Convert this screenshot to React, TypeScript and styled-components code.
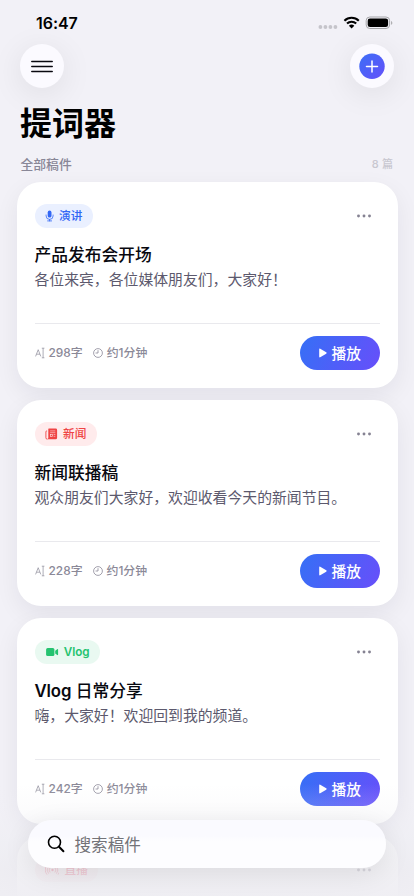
import React from "react";
import styled, { createGlobalStyle } from "styled-components";

const GlobalStyle = createGlobalStyle`
  * { box-sizing: border-box; }
  html, body { margin: 0; padding: 0; overflow: hidden; background: #f2f1f7; }
  button, input { font: inherit; border: 0; padding: 0; margin: 0; background: none; }
`;

const Screen = styled.main`
  position: relative;
  width: 414px;
  height: 896px;
  overflow: hidden;
  background: #f2f1f7;
  color: #08080f;
  font-family: Inter, "Noto Sans CJK SC", sans-serif;
  white-space: nowrap;
`;

const StatusBar = styled.header`
  display: flex;
  justify-content: space-between;
  height: 44px;
  padding: 13px 21px 0 36px;
`;

const Clock = styled.span`
  font-size: 16px;
  line-height: 20px;
  font-weight: 600;
  letter-spacing: -0.05px;
  color: #000;
`;

const StatusIcons = styled.svg`
  width: 76px;
  height: 20px;
`;

const NavBar = styled.nav`
  display: flex;
  justify-content: space-between;
  padding: 0 20px;
  height: 44px;
`;

const RoundButton = styled.button`
  && {
    display: grid;
    place-items: center;
    width: 44px;
    height: 44px;
    border-radius: 50%;
    background: #fbfaff;
    box-shadow: 0 6px 32px rgba(0, 0, 0, 0.085);
  }
  svg { display: block; }
`;

const PageTitle = styled.h1`
  margin: 16px 0 0 20px;
  font-size: 32px;
  line-height: 40px;
  font-weight: 700;
  color: #000;
`;

const SectionHeader = styled.div`
  display: flex;
  align-items: center;
  justify-content: space-between;
  height: 20px;
  margin: 9px 21px 9px 20.5px;
`;

const SectionLabel = styled.span`
  font-size: 12.8px;
  font-weight: 500;
  color: #898797;
`;

const SectionCount = styled.span`
  font-size: 11px;
  font-weight: 500;
  letter-spacing: 0.1px;
  color: #c8c7d0;
`;

const CardList = styled.section`
  display: flex;
  flex-direction: column;
  gap: 12px;
  padding: 0 16.5px;
`;

const CardBox = styled.article`
  flex: none;
  height: 206px;
  padding: 22px 18px 18px;
  border-radius: 24px;
  background: #fff;
  box-shadow: 0 8px 24px rgba(20, 15, 40, 0.065);
`;

const CardTop = styled.div`
  display: flex;
  justify-content: space-between;
  align-items: center;
  height: 24px;
  padding-right: 9px;
`;

const Tag = styled.span<{ $color: string; $bg: string; $iconSpace: number }>`
  display: flex;
  align-items: center;
  height: 24px;
  padding: 0 10.5px 0 10px;
  border-radius: 12px;
  font-size: 11.7px;
  line-height: 22px;
  font-weight: 500;
  color: ${(p) => p.$color};
  background: ${(p) => p.$bg};
  svg { flex: none; margin-right: ${(p) => p.$iconSpace - 14}px; }
`;

const TagText = styled.span`
  margin-top: -1px;
`;

const CardTitle = styled.h2`
  margin: 15px 0 0;
  font-size: 16.75px;
  line-height: 24px;
  font-weight: 500;
  color: #08080f;
`;

const Latin = styled.span`
  font-weight: 600;
  letter-spacing: -0.1px;
`;

const CardText = styled.p`
  margin: 1px 0 0;
  height: 55px;
  font-size: 14.85px;
  line-height: 24px;
  color: #5c596d;
`;

const CardFooter = styled.div`
  display: flex;
  align-items: center;
  height: 47px;
  padding-top: 12px;
  border-top: 1px solid #e9e9ed;
`;

const Meta = styled.span`
  display: flex;
  align-items: center;
  gap: 4px;
  margin-right: 10px;
  font-size: 11.9px;
  line-height: 18px;
  font-weight: 500;
  color: #8b8998;
`;

const PlayButton = styled.button`
  && {
    display: flex;
    align-items: center;
    gap: 5px;
    flex: none;
    width: 80px;
    height: 34px;
    margin-left: auto;
    padding-left: 19px;
    border-radius: 17px;
    background: linear-gradient(115deg, #386ef6 5%, #6550fa 95%);
    color: #fff;
    font-size: 14.75px;
    font-weight: 500;
  }
`;

const PlayLabel = styled.span`
  margin-top: -2px;
`;

const BottomFade = styled.div`
  position: absolute;
  left: 0;
  right: 0;
  bottom: 0;
  height: 112px;
  background: linear-gradient(
    to bottom,
    rgba(239, 238, 243, 0) 0%,
    rgba(239, 238, 243, 0.18) 22%,
    rgba(238, 238, 243, 0.66) 50%,
    rgba(237, 236, 241, 0.78) 77%,
    rgba(239, 238, 243, 0.97) 100%
  );
`;

const SearchBar = styled.label`
  position: absolute;
  left: 28px;
  right: 28px;
  bottom: 28px;
  display: flex;
  align-items: center;
  gap: 9.5px;
  height: 48px;
  padding-left: 19px;
  border-radius: 24px;
  background: linear-gradient(#fafaff 0 34%, #fdfdff 44%);
  box-shadow: 0 6px 28px rgba(0, 0, 0, 0.09);
`;

const SearchHint = styled.span`
  font-size: 16.6px;
  color: #737378;
`;

type Kind = "speech" | "news" | "vlog" | "live";

interface Script {
  kind: Kind;
  tag: React.ReactNode;
  color: string;
  bg: string;
  iconSpace: number;
  title?: React.ReactNode;
  text?: string;
  count?: string;
}

const scripts: Script[] = [
  { kind: "speech", tag: "演讲", color: "#3267f5", bg: "#eaf0ff", iconSpace: 14.5, title: "产品发布会开场", text: "各位来宾，各位媒体朋友们，大家好！", count: "298字" },
  { kind: "news", tag: "新闻", color: "#ef4444", bg: "#ffebec", iconSpace: 18.6, title: "新闻联播稿", text: "观众朋友们大家好，欢迎收看今天的新闻节目。", count: "228字" },
  { kind: "vlog", tag: <Latin>Vlog</Latin>, color: "#25c370", bg: "#e9f9f1", iconSpace: 19.3, title: <><Latin>Vlog</Latin> 日常分享</>, text: "嗨，大家好！欢迎回到我的频道。", count: "242字" },
  { kind: "live", tag: "直播", color: "#f43f5e", bg: "#feecef", iconSpace: 20 },
];

const KindIcon = ({ kind }: { kind: Kind }) => (
  <svg width="14" height="14" viewBox="0 0 14 14" fill="none" stroke="currentColor">
    {kind === "speech" && (
      <>
        <rect x="2.7" y="1.6" width="3.8" height="7" rx="1.9" fill="currentColor" stroke="none" />
        <path d="M1.100 6v.9a3.500 3.500 0 0 0 7 0V6M4.600 10.400v1.500M2.600 11.900h4" strokeWidth=".8" strokeLinecap="round" />
      </>
    )}
    {kind === "news" && (
      <g transform="translate(-.6 0)">
        <path d="M4.400 1.500h6.900a1.400 1.400 0 0 1 1.400 1.400v7.800a1.500 1.500 0 0 1-1.500 1.500H3.200c.5-.4.7-.9.7-1.500V2a.5.5 0 0 1 .5-.5Z" fill="currentColor" stroke="none" />
        <path d="M2.700 4h-.5a.7.7 0 0 0-.7.7v6a1.400 1.400 0 0 0 1.600 1.400" strokeWidth=".9" />
        <path d="M5.700 3.900h5.200M5.700 5.700h5.200M9.200 7.500h1.700M9.200 9.300h1.700" stroke="#ffebec" strokeWidth=".55" />
        <rect x="5.900" y="7.400" width="2.200" height="2.200" stroke="#ffebec" strokeWidth=".6" />
      </g>
    )}
    {kind === "vlog" && (
      <g fill="currentColor" stroke="none">
        <rect x="1.100" y="3" width="8.300" height="8.100" rx="1.500" />
        <path d="m10.200 5.700 2-1.500c.5-.4.9-.1.9.4v5c0 .5-.4.7-.9.4l-2-1.500Z" />
      </g>
    )}
    {kind === "live" && (
      <g strokeLinecap="round">
        <circle cx="7.500" cy="7" r="1.200" fill="currentColor" stroke="none" />
        <path d="M4.900 4.800a3.400 3.400 0 0 0 0 4.400M10.100 4.800a3.400 3.400 0 0 1 0 4.400M3.300 3.700a5.300 5.300 0 0 0 0 6.600M11.700 3.700a5.300 5.300 0 0 1 0 6.600M1.800 2.600a7.200 7.200 0 0 0 0 8.800M13.200 2.600a7.200 7.200 0 0 1 0 8.800" strokeWidth=".8" />
      </g>
    )}
  </svg>
);

const ScriptCard = ({ script }: { script: Script }) => (
  <CardBox>
    <CardTop>
      <Tag $color={script.color} $bg={script.bg} $iconSpace={script.iconSpace}>
        <KindIcon kind={script.kind} />
        <TagText>{script.tag}</TagText>
      </Tag>
      <svg width="14" height="4" viewBox="0 0 14 4" fill="#858292">
        <circle cx="1.500" cy="2" r="1.450" />
        <circle cx="7" cy="2" r="1.450" />
        <circle cx="12.500" cy="2" r="1.450" />
      </svg>
    </CardTop>
    {script.title && (
      <>
        <CardTitle>{script.title}</CardTitle>
        <CardText>{script.text}</CardText>
        <CardFooter>
          <Meta>
            <svg width="10" height="12" viewBox="0 0 10 12" fill="none" stroke="currentColor" strokeWidth=".7">
              <path d="M.6 9.400 3.200 2.700l2.600 6.700M1.500 7.200h3.400M6.800 1.200h2.600M6.800 10.800h2.600M8.100 1.200v9.600" />
            </svg>
            {script.count}
          </Meta>
          <Meta>
            <svg width="10" height="10" viewBox="0 0 10 10" fill="none" stroke="currentColor" strokeWidth=".8">
              <circle cx="5" cy="5" r="4.400" />
              <path d="M5 2.200V5H2.500" />
            </svg>
            约1分钟
          </Meta>
          <PlayButton>
            <svg width="8" height="10" viewBox="0 0 8 10" fill="#fff">
              <path d="M.2 1.300c0-.7.5-.9 1-.6l6 3.600c.6.4.6 1 0 1.400l-6 3.600c-.5.3-1 .1-1-.6Z" />
            </svg>
            <PlayLabel>播放</PlayLabel>
          </PlayButton>
        </CardFooter>
      </>
    )}
  </CardBox>
);

export default function App() {
  return (
    <>
      <GlobalStyle />
      <Screen>
        <StatusBar>
          <Clock>16:47</Clock>
          <StatusIcons viewBox="0 0 76 20" fill="#000">
            <g fill="#c5c4ca">
              <circle cx="3.400" cy="14" r="1.900" />
              <circle cx="8.400" cy="14" r="1.900" />
              <circle cx="13.400" cy="14" r="1.900" />
              <circle cx="18.400" cy="14" r="1.900" />
            </g>
            <g fill="none" stroke="#000" strokeWidth="2.100">
              <path d="M27.400 7.700a10.300 10.300 0 0 1 14.400 0" />
              <path d="M30 10.600a6.600 6.600 0 0 1 9.200 0" />
            </g>
            <path d="M31.900 12.700a3.900 3.900 0 0 1 5.400 0l-2.700 2.700Z" />
            <rect x="49.200" y="4" width="23.400" height="11.500" rx="3.600" fill="none" stroke="#a5a5a9" />
            <rect x="50.700" y="5.500" width="20.400" height="8.500" rx="2.300" />
            <path d="M74.100 8v3.800c.7-.3 1.200-1 1.200-1.900s-.5-1.600-1.200-1.900Z" fill="#a5a5a9" />
          </StatusIcons>
        </StatusBar>
        <NavBar>
          <RoundButton aria-label="菜单">
            <svg width="22" height="14" viewBox="0 0 22 14" fill="none" stroke="#08080f" strokeWidth="1.500" strokeLinecap="round">
              <path d="M.8 2.400h20.400M.8 7.400h20.400M.8 12.400h20.400" />
            </svg>
          </RoundButton>
          <RoundButton aria-label="新建">
            <svg width="26" height="26" viewBox="0 0 26 26">
              <defs>
                <linearGradient id="add" x1="0" y1="0" x2="1" y2="1">
                  <stop offset="0" stopColor="#3b6ef6" />
                  <stop offset="1" stopColor="#6550fa" />
                </linearGradient>
              </defs>
              <circle cx="13" cy="13.300" r="12.700" fill="url(#add)" />
              <path d="M7.500 13.500h11M13 8v11" stroke="#fff" strokeWidth="1.500" strokeLinecap="round" />
            </svg>
          </RoundButton>
        </NavBar>
        <PageTitle>提词器</PageTitle>
        <SectionHeader>
          <SectionLabel>全部稿件</SectionLabel>
          <SectionCount>8 篇</SectionCount>
        </SectionHeader>
        <CardList>
          {scripts.map((s) => (
            <ScriptCard key={s.kind} script={s} />
          ))}
        </CardList>
        <BottomFade />
        <SearchBar>
          <svg width="18" height="18" viewBox="0 0 18 18" fill="none" stroke="#000" strokeLinecap="round">
            <circle cx="7.500" cy="7.200" r="6" strokeWidth="1.600" />
            <path d="m12 11.800 4.400 4.400" strokeWidth="2" />
          </svg>
          <SearchHint>搜索稿件</SearchHint>
        </SearchBar>
      </Screen>
    </>
  );
}
